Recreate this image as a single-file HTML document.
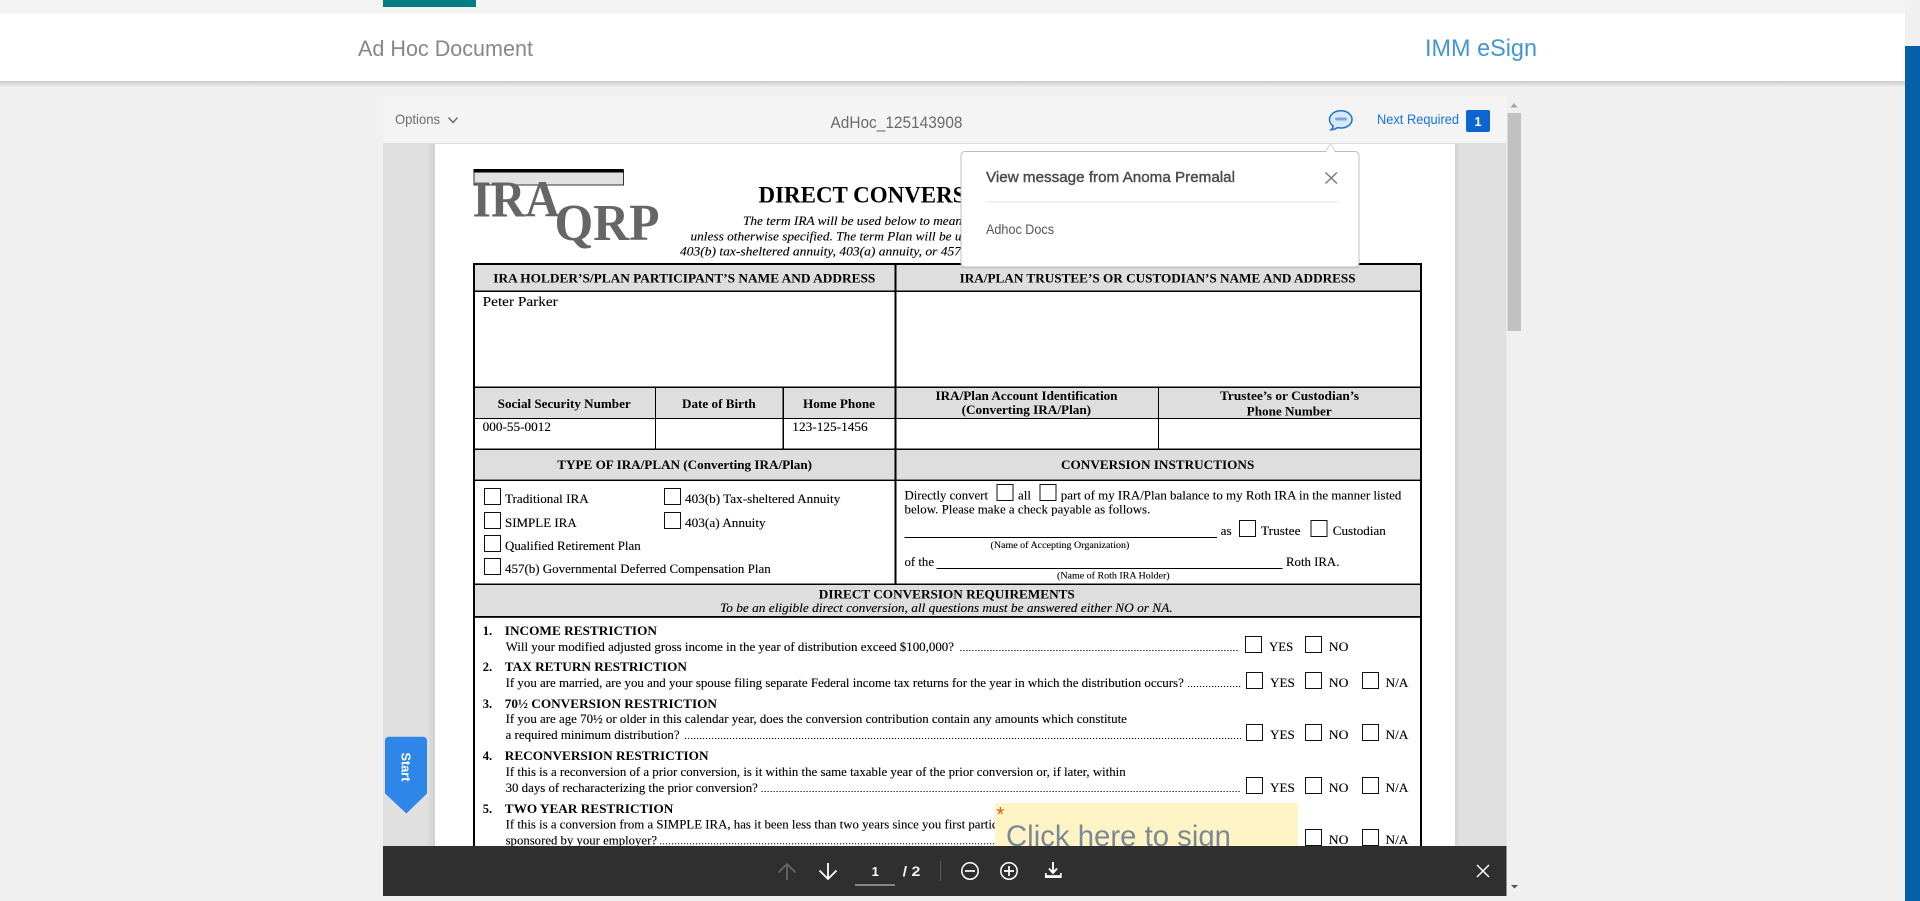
<!DOCTYPE html>
<html><head><meta charset="utf-8"><title>Ad Hoc Document</title>
<style>
html,body{margin:0;padding:0;width:1920px;height:901px;overflow:hidden;background:#f0f0f0}
svg{display:block;position:absolute;left:0;top:0}
.s{font-family:"Liberation Sans",sans-serif}
.t{font-family:"Liberation Serif",serif;fill:#000}
.b{font-weight:bold;font-size:12.5px}
.r{font-size:12.5px;stroke:#000;stroke-width:.12}
.i{font-style:italic;font-size:12.5px;stroke:#000;stroke-width:.12}
.m{font-size:9px;stroke:#000;stroke-width:.1}
.q{font-size:12.5px;stroke:#000;stroke-width:.12}
</style></head><body>
<svg width="1920" height="901" viewBox="0 0 1920 901" xmlns="http://www.w3.org/2000/svg">
<defs>
<linearGradient id="sh" x1="0" y1="0" x2="0" y2="1"><stop offset="0" stop-color="#000" stop-opacity=".16"/><stop offset="1" stop-color="#000" stop-opacity="0"/></linearGradient>
<linearGradient id="sl" x1="0" y1="0" x2="1" y2="0"><stop offset="0" stop-color="#000" stop-opacity="0"/><stop offset="1" stop-color="#000" stop-opacity=".07"/></linearGradient>
<linearGradient id="sr" x1="0" y1="0" x2="1" y2="0"><stop offset="0" stop-color="#000" stop-opacity=".07"/><stop offset="1" stop-color="#000" stop-opacity="0"/></linearGradient>
</defs>

<!-- page chrome -->
<rect x="0" y="0" width="1905" height="14" fill="#f4f4f4"/>
<rect x="383" y="0" width="93" height="7" fill="#047e82"/>
<rect x="0" y="14" width="1905" height="67" fill="#fff"/>
<rect x="0" y="81" width="1905" height="6" fill="url(#sh)"/>
<rect x="1905" y="0" width="15" height="46" fill="#f0f0f0"/>
<rect x="1905" y="46" width="15" height="855" fill="#0560a9"/>
<text class="s" x="358" y="56" font-size="22" fill="#878787" textLength="175" lengthAdjust="spacingAndGlyphs">Ad Hoc Document</text>
<text class="s" x="1425" y="56" font-size="24" fill="#4596cd" textLength="112" lengthAdjust="spacingAndGlyphs">IMM eSign</text>

<!-- viewer -->
<rect x="383" y="96" width="1123.500" height="750" fill="#e0e0e0"/>
<rect x="383" y="96" width="1123.500" height="47" fill="#f4f4f4"/>
<rect x="383" y="143" width="1123.500" height="1" fill="#dcdcdc"/>
<rect x="426" y="144" width="9" height="702" fill="url(#sl)"/>
<rect x="1455" y="144" width="5" height="702" fill="url(#sr)"/>
<rect x="435" y="144" width="1020" height="702" fill="#fff"/>

<text class="s" x="395" y="124" font-size="14" fill="#6e6e6e" textLength="45" lengthAdjust="spacingAndGlyphs">Options</text>
<path d="M448.500 117.500L453 122.500L457.500 117.500" fill="none" stroke="#6e6e6e" stroke-width="1.500"/>
<text class="s" x="830.500" y="128" font-size="16.500" fill="#6a6a6a" textLength="132" lengthAdjust="spacingAndGlyphs">AdHoc_125143908</text>

<!-- comment icon -->
<path d="M1341 110.800c6.200 0 11 3.800 11 8.600s-4.800 8.600-11 8.600c-1.200 0-2.400-.2-3.500-.4-1.800 1.300-4 2-6.500 2.200 1.100-1 1.900-2.400 2.100-3.900-2.800-1.500-3.600-4-3.600-6.500 0-4.800 5-8.600 11.500-8.600z" fill="#d8e8f8" stroke="#1e73cf" stroke-width="1.500"/>
<rect x="1335" y="117.500" width="12" height="3" rx="1.500" fill="#7ba8da"/>
<text class="s" x="1377" y="124" font-size="13.500" fill="#1473e6" textLength="82" lengthAdjust="spacingAndGlyphs">Next Required</text>
<rect x="1466" y="110" width="24" height="22" rx="2" fill="#0d66d0"/>
<text class="s" x="1478" y="126" font-size="12.500" font-weight="bold" fill="#fff" text-anchor="middle">1</text>

<!-- scrollbar -->
<rect x="1507.500" y="96" width="14" height="800" fill="#f0f0f0"/>
<rect x="1507.500" y="113" width="13.500" height="218" fill="#c1c1c1"/>
<path d="M1514 103L1517.500 107.500H1510.500z" fill="#a3a3a3"/>
<path d="M1511 885H1518L1514.500 888.500z" fill="#505050"/>

<!-- logo and title -->
<rect x="474" y="170" width="149.500" height="15" fill="#e2e2e2" stroke="#333" stroke-width="1"/>
<rect x="473.500" y="169" width="150" height="3.500" fill="#000"/>
<text class="t" x="472.500" y="216.500" font-size="52" font-weight="bold" style="fill:#666" textLength="87" lengthAdjust="spacingAndGlyphs">IRA</text>
<text class="t" x="554.500" y="240" font-size="52" font-weight="bold" style="fill:#666" textLength="105" lengthAdjust="spacingAndGlyphs">QRP</text>
<text class="t" x="758.500" y="202.500" font-size="23" font-weight="bold" textLength="207" lengthAdjust="spacingAndGlyphs">DIRECT CONVERS</text>
<text class="t i" x="743" y="225" textLength="219" lengthAdjust="spacingAndGlyphs">The term IRA will be used below to mean</text>
<text class="t i" x="690.500" y="240.300" textLength="271" lengthAdjust="spacingAndGlyphs">unless otherwise specified. The term Plan will be u</text>
<text class="t i" x="680" y="255.500" textLength="281" lengthAdjust="spacingAndGlyphs">403(b) tax-sheltered annuity, 403(a) annuity, or 457</text>

<!-- form grey rows -->
<g fill="#dedede">
<rect x="475" y="264" width="945" height="27"/>
<rect x="475" y="388" width="945" height="30"/>
<rect x="475" y="450" width="945" height="29"/>
<rect x="475" y="585" width="945" height="31"/>
</g>
<!-- form lines -->
<g fill="#000">
<rect x="473" y="263" width="949" height="2"/>
<rect x="473" y="263" width="2" height="583"/>
<rect x="1420" y="263" width="2" height="583"/>
<rect x="475" y="290.500" width="945" height="1.500"/>
<rect x="475" y="386.500" width="945" height="1.500"/>
<rect x="475" y="418" width="945" height="1"/>
<rect x="475" y="448.500" width="945" height="1.500"/>
<rect x="475" y="479.500" width="945" height="1.500"/>
<rect x="475" y="583.500" width="945" height="1.500"/>
<rect x="475" y="616" width="945" height="1.800"/>
<rect x="894.500" y="263" width="2" height="321"/>
<rect x="655" y="387" width="1" height="62"/>
<rect x="782.500" y="387" width="1.500" height="62"/>
<rect x="1158" y="387" width="1" height="62"/>
<rect x="904.500" y="537" width="312.500" height="1"/>
<rect x="936.500" y="568" width="346" height="1"/>
</g>

<!-- form header text -->
<text class="t b" x="493.300" y="282.500" textLength="382" lengthAdjust="spacingAndGlyphs">IRA HOLDER’S/PLAN PARTICIPANT’S NAME AND ADDRESS</text>
<text class="t b" x="959.600" y="282.500" textLength="396" lengthAdjust="spacingAndGlyphs">IRA/PLAN TRUSTEE’S OR CUSTODIAN’S NAME AND ADDRESS</text>
<text class="t r" x="482.700" y="306" style="font-size:14px" textLength="75" lengthAdjust="spacingAndGlyphs">Peter Parker</text>
<text class="t b" x="497.700" y="408" textLength="133" lengthAdjust="spacingAndGlyphs">Social Security Number</text>
<text class="t b" x="682" y="408" textLength="73.700" lengthAdjust="spacingAndGlyphs">Date of Birth</text>
<text class="t b" x="803" y="408" textLength="72" lengthAdjust="spacingAndGlyphs">Home Phone</text>
<text class="t b" x="935.500" y="400" textLength="182" lengthAdjust="spacingAndGlyphs">IRA/Plan Account Identification</text>
<text class="t b" x="961.600" y="414" textLength="129.500" lengthAdjust="spacingAndGlyphs">(Converting IRA/Plan)</text>
<text class="t b" x="1220" y="400" textLength="139" lengthAdjust="spacingAndGlyphs">Trustee’s or Custodian’s</text>
<text class="t b" x="1246.700" y="415.300" textLength="85" lengthAdjust="spacingAndGlyphs">Phone Number</text>
<text class="t r" x="482.700" y="431" textLength="68.300" lengthAdjust="spacingAndGlyphs">000-55-0012</text>
<text class="t r" x="792.300" y="431" textLength="75.400" lengthAdjust="spacingAndGlyphs">123-125-1456</text>
<text class="t b" x="557.300" y="469" textLength="254.700" lengthAdjust="spacingAndGlyphs">TYPE OF IRA/PLAN (Converting IRA/Plan)</text>
<text class="t b" x="1061" y="469" textLength="193.300" lengthAdjust="spacingAndGlyphs">CONVERSION INSTRUCTIONS</text>

<!-- checkboxes -->
<g fill="#fff" stroke="#111" stroke-width="1">
<rect x="484.500" y="488.500" width="16" height="16"/>
<rect x="484.500" y="512.500" width="16" height="16"/>
<rect x="484.500" y="535.500" width="16" height="16"/>
<rect x="484.500" y="558.500" width="16" height="16"/>
<rect x="664.500" y="488.500" width="16" height="16"/>
<rect x="664.500" y="512.500" width="16" height="16"/>
<rect x="997" y="484.500" width="16" height="16"/>
<rect x="1040" y="484.500" width="16" height="16"/>
<rect x="1239.500" y="520.500" width="16" height="16"/>
<rect x="1311" y="520.500" width="16" height="16"/>
<rect x="1245.500" y="636.500" width="16" height="16"/>
<rect x="1305.500" y="636.500" width="16" height="16"/>
<rect x="1246.500" y="672.500" width="16" height="16"/>
<rect x="1305.500" y="672.500" width="16" height="16"/>
<rect x="1362.500" y="672.500" width="16" height="16"/>
<rect x="1246.500" y="724.500" width="16" height="16"/>
<rect x="1305.500" y="724.500" width="16" height="16"/>
<rect x="1362.500" y="724.500" width="16" height="16"/>
<rect x="1246.500" y="777.500" width="16" height="16"/>
<rect x="1305.500" y="777.500" width="16" height="16"/>
<rect x="1362.500" y="777.500" width="16" height="16"/>
<rect x="1305.500" y="829.500" width="16" height="16"/>
<rect x="1362.500" y="829.500" width="16" height="16"/>
</g>

<!-- type of plan -->
<text class="t r" x="505" y="503" textLength="83.700" lengthAdjust="spacingAndGlyphs">Traditional IRA</text>
<text class="t r" x="505" y="527" textLength="71.700" lengthAdjust="spacingAndGlyphs">SIMPLE IRA</text>
<text class="t r" x="505" y="550" textLength="135.700" lengthAdjust="spacingAndGlyphs">Qualified Retirement Plan</text>
<text class="t r" x="505" y="573" textLength="265.700" lengthAdjust="spacingAndGlyphs">457(b) Governmental Deferred Compensation Plan</text>
<text class="t r" x="685" y="503" textLength="155.300" lengthAdjust="spacingAndGlyphs">403(b) Tax-sheltered Annuity</text>
<text class="t r" x="685" y="527" textLength="80.700" lengthAdjust="spacingAndGlyphs">403(a) Annuity</text>

<!-- conversion instructions -->
<text class="t r" x="904.500" y="499.300" textLength="83.500" lengthAdjust="spacingAndGlyphs">Directly convert</text>
<text class="t r" x="1018" y="499.300" textLength="13" lengthAdjust="spacingAndGlyphs">all</text>
<text class="t r" x="1060.800" y="499.300" textLength="340.600" lengthAdjust="spacingAndGlyphs">part of my IRA/Plan balance to my Roth IRA in the manner listed</text>
<text class="t r" x="904.500" y="513.300" textLength="245.800" lengthAdjust="spacingAndGlyphs">below. Please make a check payable as follows.</text>
<text class="t r" x="1220.600" y="535" textLength="11" lengthAdjust="spacingAndGlyphs">as</text>
<text class="t r" x="1261" y="535" textLength="39.500" lengthAdjust="spacingAndGlyphs">Trustee</text>
<text class="t r" x="1332.800" y="535" textLength="53" lengthAdjust="spacingAndGlyphs">Custodian</text>
<text class="t m" x="990.500" y="548" textLength="138.800" lengthAdjust="spacingAndGlyphs">(Name of Accepting Organization)</text>
<text class="t r" x="904.500" y="566" textLength="29.500" lengthAdjust="spacingAndGlyphs">of the</text>
<text class="t r" x="1286" y="566" textLength="53.400" lengthAdjust="spacingAndGlyphs">Roth IRA.</text>
<text class="t m" x="1057" y="578.700" textLength="112.600" lengthAdjust="spacingAndGlyphs">(Name of Roth IRA Holder)</text>

<!-- requirements -->
<text class="t b" x="818.800" y="598.300" textLength="256" lengthAdjust="spacingAndGlyphs">DIRECT CONVERSION REQUIREMENTS</text>
<text class="t i" x="720" y="612" textLength="452.700" lengthAdjust="spacingAndGlyphs">To be an eligible direct conversion, all questions must be answered either NO or NA.</text>

<text class="t b" x="482.700" y="635">1.</text>
<text class="t b" x="504.800" y="635" textLength="152.200" lengthAdjust="spacingAndGlyphs">INCOME RESTRICTION</text>
<text class="t q" x="505.600" y="651" textLength="448.400" lengthAdjust="spacingAndGlyphs">Will your modified adjusted gross income in the year of distribution exceed $100,000?</text>

<text class="t b" x="482.700" y="671">2.</text>
<text class="t b" x="504.800" y="671" textLength="182.200" lengthAdjust="spacingAndGlyphs">TAX RETURN RESTRICTION</text>
<text class="t q" x="505.600" y="687" textLength="678.200" lengthAdjust="spacingAndGlyphs">If you are married, are you and your spouse filing separate Federal income tax returns for the year in which the distribution occurs?</text>

<text class="t b" x="482.700" y="708">3.</text>
<text class="t b" x="504.800" y="708" textLength="212.200" lengthAdjust="spacingAndGlyphs">70½ CONVERSION RESTRICTION</text>
<text class="t q" x="505.600" y="723" textLength="621.300" lengthAdjust="spacingAndGlyphs">If you are age 70½ or older in this calendar year, does the conversion contribution contain any amounts which constitute</text>
<text class="t q" x="505.600" y="739" textLength="174" lengthAdjust="spacingAndGlyphs">a required minimum distribution?</text>

<text class="t b" x="482.700" y="760">4.</text>
<text class="t b" x="504.800" y="760" textLength="203.700" lengthAdjust="spacingAndGlyphs">RECONVERSION RESTRICTION</text>
<text class="t q" x="505.600" y="776" textLength="620.100" lengthAdjust="spacingAndGlyphs">If this is a reconversion of a prior conversion, is it within the same taxable year of the prior conversion or, if later, within</text>
<text class="t q" x="505.600" y="792" textLength="252.300" lengthAdjust="spacingAndGlyphs">30 days of recharacterizing the prior conversion?</text>

<text class="t b" x="482.700" y="813">5.</text>
<text class="t b" x="504.800" y="813" textLength="168.500" lengthAdjust="spacingAndGlyphs">TWO YEAR RESTRICTION</text>
<text class="t q" x="505.600" y="828.300" textLength="492" lengthAdjust="spacingAndGlyphs">If this is a conversion from a SIMPLE IRA, has it been less than two years since you first partic</text>
<text class="t q" x="505.600" y="844.300" textLength="151.400" lengthAdjust="spacingAndGlyphs">sponsored by your employer?</text>

<!-- leader dots -->
<g stroke="#000" stroke-width="1" stroke-dasharray="1.200 1.800" fill="none">
<path d="M960.300 650.500H1238"/>
<path d="M1188 686.500H1241"/>
<path d="M685 738.500H1241"/>
<path d="M761.500 791.500H1241"/>
<path d="M660 843.800H995"/>
</g>

<!-- answers -->
<g>
<text class="t q" x="1269" y="651" textLength="24.300" lengthAdjust="spacingAndGlyphs">YES</text>
<text class="t q" x="1328.800" y="651" textLength="19.700" lengthAdjust="spacingAndGlyphs">NO</text>
<text class="t q" x="1270" y="687" textLength="24.800" lengthAdjust="spacingAndGlyphs">YES</text>
<text class="t q" x="1328.800" y="687" textLength="19.700" lengthAdjust="spacingAndGlyphs">NO</text>
<text class="t q" x="1385.500" y="687" textLength="22.900" lengthAdjust="spacingAndGlyphs">N/A</text>
<text class="t q" x="1270" y="738.800" textLength="24.800" lengthAdjust="spacingAndGlyphs">YES</text>
<text class="t q" x="1328.800" y="738.800" textLength="19.700" lengthAdjust="spacingAndGlyphs">NO</text>
<text class="t q" x="1385.500" y="738.800" textLength="22.900" lengthAdjust="spacingAndGlyphs">N/A</text>
<text class="t q" x="1270" y="792" textLength="24.800" lengthAdjust="spacingAndGlyphs">YES</text>
<text class="t q" x="1328.800" y="792" textLength="19.700" lengthAdjust="spacingAndGlyphs">NO</text>
<text class="t q" x="1385.500" y="792" textLength="22.900" lengthAdjust="spacingAndGlyphs">N/A</text>
<text class="t q" x="1328.800" y="844" textLength="19.700" lengthAdjust="spacingAndGlyphs">NO</text>
<text class="t q" x="1385.500" y="844" textLength="22.900" lengthAdjust="spacingAndGlyphs">N/A</text>
</g>

<!-- signature field -->
<rect x="995" y="803" width="303" height="43" fill="#fff4c6"/>
<text class="s" x="996.500" y="821" font-size="20" fill="#f4511e">*</text>
<text class="s" x="1006" y="846" font-size="30" fill="#7c8a96" textLength="225" lengthAdjust="spacingAndGlyphs">Click here to sign</text>

<!-- Start tab -->
<path d="M389 736.700H423a4 4 0 0 1 4 4V793.500L406.400 813.500L385 793.500V740.700a4 4 0 0 1 4-4z" fill="#2d86e8"/>
<text class="s" transform="translate(401.500 752.500) rotate(90)" font-size="13" font-weight="bold" fill="#fff" textLength="29" lengthAdjust="spacingAndGlyphs">Start</text>

<!-- popup -->
<rect x="960" y="267" width="400" height="1.500" fill="#000" fill-opacity=".08"/>
<path d="M1330.500 143.500L1325.500 151.500H1335.500z" fill="#fff" stroke="#d0d0d0" stroke-width="1"/>
<rect x="961" y="151.500" width="398" height="115.500" rx="4" fill="#fff" stroke="#bdbdbd" stroke-width="1"/>
<rect x="1326.500" y="150" width="8" height="3" fill="#fff"/>
<text class="s" x="986" y="182" font-size="15" fill="#4b4b4b" stroke="#4b4b4b" stroke-width=".4" textLength="249" lengthAdjust="spacingAndGlyphs">View message from Anoma Premalal</text>
<path d="M1325.500 172.500L1337 183.500M1337 172.500L1325.500 183.500" stroke="#777" stroke-width="1.400" fill="none"/>
<rect x="986" y="201.500" width="353" height="1" fill="#e3e3e3"/>
<text class="s" x="986" y="234" font-size="14" fill="#555" textLength="68" lengthAdjust="spacingAndGlyphs">Adhoc Docs</text>

<!-- footer -->
<rect x="383" y="846" width="1123.500" height="50" fill="#2f2f2f"/>
<path d="M787 880V864M778.500 872.500L787 864L795.500 872.500" fill="none" stroke="#666" stroke-width="1.800"/>
<path d="M828 863V879M819.500 870.500L828 879L836.500 870.500" fill="none" stroke="#fff" stroke-width="1.800"/>
<text class="s" x="875.300" y="876" font-size="13" font-weight="bold" fill="#fff" text-anchor="middle">1</text>
<rect x="855" y="884.500" width="40" height="1" fill="#ddd"/>
<text class="s" x="902.600" y="876" font-size="14" font-weight="bold" fill="#f2f2f2" textLength="17.800" lengthAdjust="spacingAndGlyphs">/ 2</text>
<rect x="940" y="861" width="1" height="20" fill="#5a5a5a"/>
<circle cx="970" cy="871" r="8.200" fill="none" stroke="#fff" stroke-width="1.500"/>
<path d="M965 871H975" stroke="#fff" stroke-width="1.700" fill="none"/>
<circle cx="1009" cy="871" r="8.200" fill="none" stroke="#fff" stroke-width="1.500"/>
<path d="M1004 871H1014M1009 866V876" stroke="#fff" stroke-width="1.700" fill="none"/>
<path d="M1053 862V873M1049 868.500L1053 873L1057 868.500" fill="none" stroke="#fff" stroke-width="1.900"/>
<path d="M1045.800 873V877H1060.800V873" fill="none" stroke="#fff" stroke-width="1.700"/>
<rect x="1045" y="875.200" width="16.500" height="2.600" fill="#fff"/>
<path d="M1477 865L1489 877M1489 865L1477 877" stroke="#fff" stroke-width="1.500" fill="none"/>
</svg>
</body></html>
